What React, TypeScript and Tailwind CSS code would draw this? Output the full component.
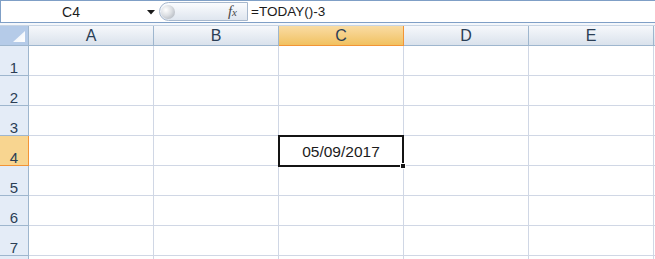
import React from 'react';

const COLS = ['A', 'B', 'C', 'D', 'E'];
const ROWS = [1, 2, 3, 4, 5, 6, 7, 8];
const SEL_COL = 'C';
const SEL_ROW = 4;

function NameArrow() {
  return (
    <svg width="8" height="5" viewBox="0 0 8 5" className="absolute left-[146px] top-[9px]">
      <path d="M0 0 H8 L4 4.5 Z" fill="#1a1a1a" />
    </svg>
  );
}

export default function App() {
  return (
    <div className="w-[655px] h-[259px] overflow-hidden bg-white font-['Liberation_Sans',Arial,sans-serif] text-[#1b1b1b]">
      {/* Formula bar */}
      <div className="flex h-[23px] border-t border-b border-l border-[#7f9fc6] bg-white">
        <div className="relative flex w-[158px] items-center">
          <span className="w-[140px] text-center text-[14px] leading-none">C4</span>
          <NameArrow />
        </div>
        <div className="my-[1px] flex w-[89px] items-center justify-between rounded-l-full border border-[#a7b8cd] bg-gradient-to-b from-[#fbfcfe] to-[#dfe6ef] pl-[1px] pr-[10px]">
          <div className="h-[14px] w-[14px] rounded-full bg-[radial-gradient(circle_at_35%_35%,#ffffff_0%,#dcdfe3_45%,#a3a9b2_100%)]" />
          <span className="font-['Liberation_Serif',serif] text-[15px] italic leading-none text-[#4a4a4a]">
            f<span className="text-[11px]">x</span>
          </span>
        </div>
        <div className="flex flex-1 items-center pl-[3px] text-[13.5px] leading-none">=TODAY()-3</div>
      </div>
      <div className="h-[3px] border-b border-[#c8d5e4] bg-[#f4f7fb]" />

      {/* Sheet grid */}
      <div className="grid grid-cols-[29px_repeat(5,125px)_1fr]">
        {/* Header row */}
        <div className="relative h-[20px] border-r border-b border-[#9eb6ce] bg-[#b5cbe8]">
          <svg width="12" height="11" viewBox="0 0 12 11" className="absolute right-[3px] bottom-[3px]">
            <defs>
              <linearGradient id="tri" x1="0" y1="0" x2="1" y2="1">
                <stop offset="0" stopColor="#e9f0f9" />
                <stop offset="1" stopColor="#ffffff" />
              </linearGradient>
            </defs>
            <path d="M12 0 V11 H0 Z" fill="url(#tri)" />
          </svg>
        </div>
        {COLS.map((c) => (
          <div
            key={c}
            className={
              c === SEL_COL
                ? 'flex h-[20px] items-center justify-center border-r border-b border-[#f29436] bg-gradient-to-b from-[#f9dca3] to-[#f1c15f] text-[16px] leading-none text-[#2b3e55]'
                : 'flex h-[20px] items-center justify-center border-r border-b border-[#9eb6ce] bg-gradient-to-b from-[#f6f8fb] to-[#dae2ec] text-[16px] leading-none text-[#2b3e55]'
            }
          >
            {c}
          </div>
        ))}
        <div className="h-[20px] border-b border-[#9eb6ce] bg-gradient-to-b from-[#f6f8fb] to-[#dae2ec]" />

        {/* Body rows */}
        {ROWS.map((r) => (
          <React.Fragment key={r}>
            <div
              className={
                r === SEL_ROW
                  ? 'flex h-[30px] items-end justify-center border-r border-b border-[#f29436] bg-[#f8d590] text-[15px] leading-none text-[#2b3e55]'
                  : 'flex h-[30px] items-end justify-center border-r border-b border-[#9eb6ce] bg-[#e4ecf7] text-[15px] leading-none text-[#2b3e55]'
              }
            >
              {r < 8 ? r : null}
            </div>
            {COLS.map((c) => (
              <div key={c} className="relative h-[30px] border-r border-b border-[#d0d7e5]">
                {c === SEL_COL && r === SEL_ROW && (
                  <div className="absolute left-[-1px] top-[-1px] z-10 flex h-[32px] w-[126px] items-center justify-center border-2 border-[#141414] pt-[1px] text-[15.5px] leading-none">
                    05/09/2017
                    <div className="absolute right-[-4px] bottom-[-4px] h-[6px] w-[6px] border border-white bg-[#141414]" />
                  </div>
                )}
              </div>
            ))}
            <div className="h-[30px] border-b border-[#d0d7e5]" />
          </React.Fragment>
        ))}
      </div>
    </div>
  );
}
